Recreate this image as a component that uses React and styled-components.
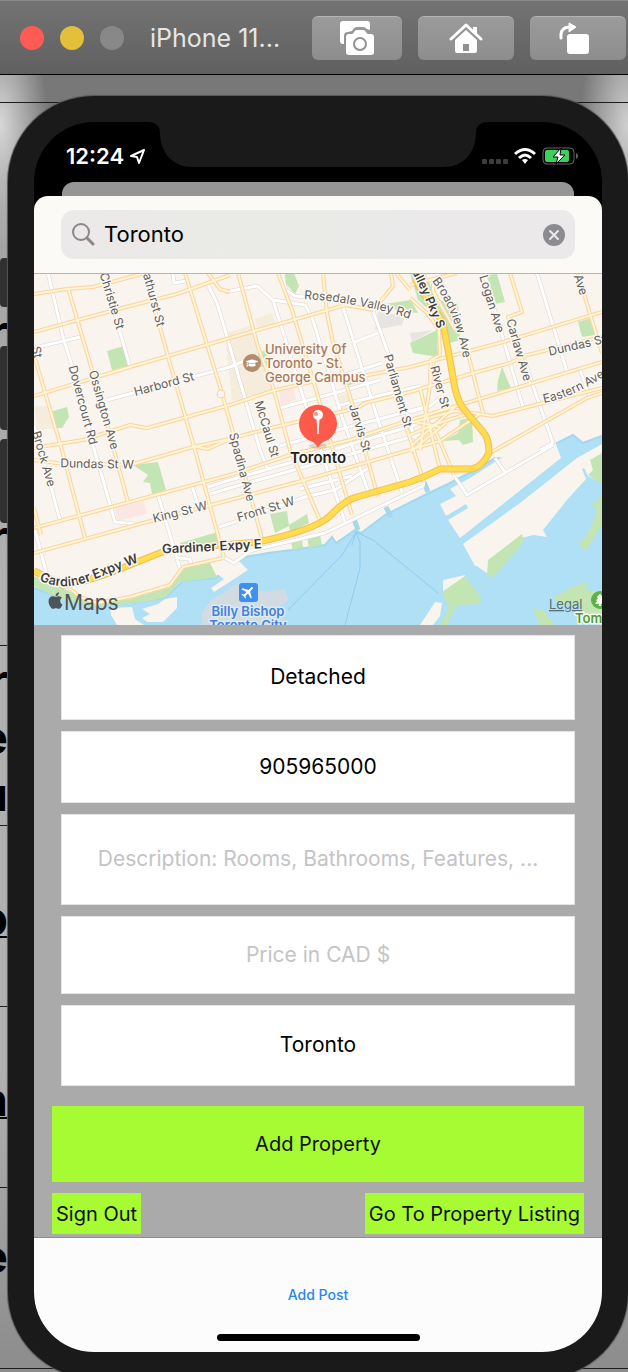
import React from "react";
import styled, { createGlobalStyle } from "styled-components";
import { FaApple, FaTree, FaGraduationCap } from "react-icons/fa";
import { MdLocalAirport } from "react-icons/md";

const Global = createGlobalStyle`
  * { box-sizing: border-box; }
  body { margin: 0; background: #a8a8a8; font-family: Inter, "Liberation Sans", sans-serif; }
  button, input { font: inherit; }
`;

const Page = styled.div`
  min-height: 100vh;
  display: flex;
  flex-direction: column;
  overflow: hidden;
`;

/* ---------- simulator window bar ---------- */

const TitleBar = styled.header`
  display: flex;
  align-items: center;
  height: 75px;
  padding: 0 2px 0 20px;
  background: linear-gradient(#737373, #606060);
  border-top: 1px solid #8a8a8a;
  border-bottom: 1px solid #000;
`;

const Lights = styled.div`
  display: flex;
  gap: 16px;
`;

const Light = styled.button`
  width: 24px;
  height: 24px;
  padding: 0;
  border: 0;
  border-radius: 50%;
  background: ${(p) => p.$color};
`;

const WindowTitle = styled.h1`
  flex: 1;
  margin: 0 0 0 26px;
  font-size: 25px;
  line-height: 32px;
  font-weight: 400;
  color: #e6e6e6;
  white-space: nowrap;
`;

const Tools = styled.div`
  display: flex;
  gap: 16px;
`;

const ToolButton = styled.button`
  display: grid;
  place-items: center;
  width: ${(p) => p.$width}px;
  height: 44px;
  padding: 0;
  border: 0;
  border-top: 1px solid #b4b4b4;
  border-radius: 6px;
  background: linear-gradient(#9b9b9b, #8d8d8d);
`;

/* ---------- document behind the phone ---------- */

const Desktop = styled.main`
  position: relative;
  flex: 1;
  padding: 21px 0 0 8px;
  background:
    radial-gradient(48px 120px at 0 50px, #d8d8d8, rgba(200, 200, 200, 0)),
    radial-gradient(48px 120px at 100% 50px, #d0d0d0, rgba(200, 200, 200, 0)),
    linear-gradient(#787878 0, #787878 30px, #a4a4a4 160px, #b0b0b0 500px, #b0b0b0 1000px, #8c8c8c 1297px);
`;

const Paper = styled.div`
  position: absolute;
  inset: 0;
  overflow: hidden;
`;

const PaperRow = styled.div`
  display: flex;
  flex-direction: column;
  justify-content: ${(p) => p.$justify || "center"};
  height: ${(p) => p.$height}px;
  padding: ${(p) => p.$pad || "0"};
  border-bottom: 1px solid #1c1c1c;
`;

const PaperText = styled.span`
  display: flex;
  justify-content: flex-end;
  width: 8px;
  height: 57px;
  font-size: 46px;
  line-height: 57px;
  font-weight: 700;
  color: #000;
  text-decoration: ${(p) => (p.$underline ? "underline" : "none")};
  text-decoration-thickness: 2px;
`;

const SideKeys = styled.div`
  position: absolute;
  top: 183px;
  left: 0;
  display: flex;
  flex-direction: column;
`;

const SideKey = styled.span`
  width: 9px;
  height: ${(p) => p.$height}px;
  margin-bottom: ${(p) => p.$after || 0}px;
  border-radius: 4px 0 0 4px;
  background: #303030;
`;

/* ---------- phone ---------- */

const Phone = styled.div`
  position: relative;
  margin-bottom: -6px;
  padding: 26px;
  border-radius: 86px;
  background: #1a1a1a;
  box-shadow: 0 0 1px 1px #555;
`;

const Screen = styled.div`
  position: relative;
  display: flex;
  flex-direction: column;
  overflow: hidden;
  border-radius: 60px;
  background: #000;
`;

const Notch = styled.svg`
  position: absolute;
  top: 0;
  left: 50%;
  width: 344px;
  height: 45px;
  margin-left: -172px;
`;

const StatusBar = styled.div`
  display: flex;
  justify-content: space-between;
  align-items: center;
  height: 60px;
  padding: 8px 23px 0 32px;
  color: #fff;
`;

const Clock = styled.div`
  display: flex;
  align-items: center;
  gap: 6px;
  font-size: 22px;
  line-height: 26px;
  font-weight: 600;
`;

const PreviousCard = styled.div`
  height: 14px;
  margin: 0 28px;
  border-radius: 12px 12px 0 0;
  background: #969696;
`;

const Sheet = styled.div`
  position: relative;
  background: #000;
`;

const SearchHeader = styled.div`
  padding: 14px 27px;
  border-radius: 14px 14px 0 0;
  border-bottom: 1px solid #b4b4b0;
  background: #fbfaf7;
`;

const SearchBox = styled.label`
  display: flex;
  align-items: center;
  gap: 8px;
  height: 49px;
  padding: 0 10px;
  border-radius: 13px;
  background: linear-gradient(90deg, #ebe9e9, #eaebe7 45%, #ebe9ea 75%);
`;

const SearchInput = styled.input`
  flex: 1;
  min-width: 0;
  padding: 0 0 2px;
  border: 0;
  outline: 0;
  background: transparent;
  font-size: 22px;
  line-height: 28px;
  color: #000;
`;

const ClearButton = styled.button`
  display: flex;
  padding: 0;
  border: 0;
  background: transparent;
`;

const MapView = styled.svg`
  display: block;
  width: 100%;
  height: 351px;
  background: #f9f4ed;
`;

/* ---------- property form ---------- */

const Form = styled.form`
  padding: 10px 18px 3px;
  background: #aaa;
`;

const Fields = styled.div`
  display: flex;
  flex-direction: column;
  gap: 11px;
  padding: 0 9px 20px;
`;

const Field = styled.input`
  width: 100%;
  height: ${(p) => p.$height}px;
  padding: 0 12px 2px;
  border: 1px solid #e4e4e4;
  border-radius: 0;
  outline: 0;
  background: #fff;
  text-align: center;
  font-size: 21px;
  color: #000;
  &::placeholder { color: #c4c4c6; opacity: 1; }
`;

const Actions = styled.div`
  display: flex;
  justify-content: space-between;
  margin-top: 11px;
`;

const LimeButton = styled.button`
  width: ${(p) => (p.$wide ? "100%" : "auto")};
  height: ${(p) => (p.$wide ? 76 : 41)}px;
  display: block;
  padding: 0 4px;
  border: 0;
  background: #a6fb32;
  color: #101010;
  font-size: 20px;
  white-space: nowrap;
`;

const TabBar = styled.nav`
  display: flex;
  flex-direction: column;
  align-items: center;
  justify-content: space-between;
  height: 115px;
  padding: 48px 0 11px;
  border-top: 1px solid #8e8e8e;
  background: #fcfcfc;
`;

const Tab = styled.a`
  font-size: 14px;
  line-height: 18px;
  font-weight: 500;
  color: #1f87f5;
  text-decoration: none;
`;

const HomeIndicator = styled.span`
  width: 203px;
  height: 7px;
  border-radius: 4px;
  background: #000;
`;

/* ---------- map drawing ---------- */

const Road = styled.path`
  fill: none;
  stroke-linejoin: round;
  stroke: ${(p) => p.$color};
  stroke-width: ${(p) => p.$width};
`;

const MapLabel = styled.text`
  font-size: ${(p) => p.$size || 12}px;
  font-weight: ${(p) => p.$weight || 400};
  fill: ${(p) => p.$color || "#5f5f60"};
  stroke: ${(p) => p.$halo || "#fbf7f1"};
  stroke-width: 3px;
  stroke-linejoin: round;
  paint-order: stroke;
`;

const streets = [
  "M48 273L63 337L75 375L93 445L115 522L137 524", "M34 348L80 337", "M103 273L130 367",
  "M107 400L230 367L258 355", "M207 283L217 303L230 347L260 450L268 470",
  "M225 292L257 286L273 300L305 305L312 317L342 417L369 494", "M273 300L305 403L345 522",
  "M343 307L378 420L402 492", "M283 278L286 290L295 296L305 297",
  "M372 308L388 353L412 430L421 450", "M280 408L335 393L380 380", "M355 342L378 333",
  "M345 375L382 363", "M537 273L567 372", "M484 273L523 407", "M524 360L553 443L540 450",
  "M580 370L590 397", "M410 412L430 406L440 398", "M553 445L467 495L455 477", "M495 458L505 472",
  "M34 425L60 520", "M35 530L47 575L70 590", "M158 495L181 572", "M176 558L190 559L191 564",
  "M192 486L197 502", "M208 487L230 480L300 460L358 442L425 422", "M210 494L230 488L340 457L425 433",
  "M219 527L235 522L305 497L335 490L370 467", "M225 558L234 563L250 551L325 533L400 497L423 486L424 478",
  "M173 274L174 283L186 281", "M280 446L345 428L425 407", "M300 489L352 476", "M340 405L420 386",
  "M363 436L425 418",
];

const arterials = [
  "M34 294L67 289L93 287L127 278L145 273", "M34 332L78 320L130 306L177 294L230 275",
  "M34 396L130 367L230 338L328 310L345 305L373 310", "M34 448L83 440L130 425L147 428L230 405L272 391",
  "M68 288L97 387L128 502", "M34 355L62 450L85 538", "M34 508L41 535",
  "M145 273L167 353L195 450L224 558", "M185 273L222 393L242 465L263 542",
  "M238 273L258 347L273 387L290 450L322 525", "M278 273L292 310L317 393L330 440L352 515",
  "M323 273L327 313L333 343L352 403L378 497", "M225 440L275 427L358 408L365 403L410 392L477 372L510 363L527 355L602 337",
  "M272 391L315 381L358 377L410 367L503 342L602 312", "M410 285L457 273",
  "M34 460L57 463L130 465L193 447L225 440", "M192 446L208 449L230 439",
  "M34 528L100 510L230 475L290 455L350 440L410 420L602 362", "M34 553L143 523L230 500L305 480L368 462L440 441L480 414",
  "M63 583L80 597L97 603L130 597L170 585L183 567L223 558", "M208 273L220 289L230 292",
  "M473 413L493 416L543 403L602 388", "M490 453L587 398L602 393", "M510 273L522 312L508 317L530 383",
  "M467 350L483 413", "M576 268L602 353", "M433 280L433 291L455 330", "M410 298L428 314L439 330L440 355L431 360L430 380",
  "M410 423L455 411L473 413", "M410 435L433 425L470 413", "M412 445L455 407", "M410 452L446 423",
  "M434 360L420 450", "M405 423L424 482", "M435 430L454 475", "M405 420L440 427",
  "M391 273L393 286L385 296L373 310", "M396 273L410 290", "M420 388L440 469",
];

const highway =
  "M415 278L421 290L434 308L443 323L453 377Q456 399 463 408L484 433Q489 439 489 453Q482 467 472 469L440 469Q425 477 410 482L357 497Q345 500 330 516Q315 530 258 542L210 546L165 551L137 562Q90 582 63 585L34 571";

const parks = [
  "M107 351L124 346L130 366L112 370Z", "M53 411L67 407L69 417L62 428L56 428Z",
  "M133 465L158 462L166 490L152 494L150 483L143 482L148 475Z", "M180 543L218 532L220 541L180 548Z",
  "M270 514L287 511L289 526L275 533Z", "M289 525L307 514L309 523L290 532Z",
  "M410 273L425 273L437 300L458 303L460 340L450 343L440 320L418 300Z",
  "M410 343L437 330L438 357L413 353Z", "M487 275L497 274L505 302L495 304Z",
  "M578 322L591 318L595 335L582 337Z", "M502 367L511 388L497 391L498 380Z",
  "M460 420L472 417L473 442L463 445L459 440L443 441L458 433Z", "M285 274L294 273L299 286L295 294L286 284Z",
  "M385 304L411 300L418 313L398 311Z", "M413 343L425 339L425 350L415 352Z", "M256 354L266 350L269 366L259 367Z",
  "M347 375L362 371L361 380L348 386Z",
];

const shoreParks = [
  "M34 576L64 589L96 603L130 599L170 587L184 567L210 563L217 577L180 582L165 598L130 604L92 607L60 599L34 586Z",
  "M291 543L302 540L303 548L293 550Z", "M307 537L320 535L322 545L309 548Z",
  "M488 560L522 534L524 542L493 578L487 575Z", "M602 453L590 460L593 470L588 475L602 484Z",
  "M602 495L592 505L597 510L592 525L583 540L578 542L585 552L602 525Z",
  "M442 592L465 576L481 597L480 604L457 605L447 625L440 625L449 608Z",
  "M533 608L543 610L555 625L540 625Z", "M553 598L570 588L587 581L586 590L602 592L602 612L585 625L580 606L560 605Z",
];

const labels = [
  ["Christie St", 108, 302, 73], ["Bathurst St", 149, 297, 75], ["Brock Ave", 40, 460, 74],
  ["St", 33, 353, 78], ["Dovercourt Rd", 79, 406, 75], ["Ossington Ave", 100, 411, 74],
  ["Harbord St", 165, 388, -15], ["Logan Ave", 488, 305, 73], ["Carlaw Ave", 515, 351, 74],
  ["Ave", 577, 286, 72], ["River St", 436, 388, 75], ["Parliament St", 394, 392, 74],
  ["Jarvis St", 356, 429, 73], ["McCaul St", 263, 430, 73], ["Spadina Ave", 238, 468, 75],
  ["Dundas St W", 97, 468, 1], ["King St W", 181, 516, -14], ["Front St W", 267, 513, -17],
  ["Dundas St E", 583, 348, -13],
];

function TorontoMap() {
  return (
    <MapView viewBox="34 274 568 351" preserveAspectRatio="xMidYMid slice" role="img" aria-label="Map of Toronto">
      <defs>
        <path id="rosedale" d="M304 299Q370 303 424 324" />
        <path id="valley" d="M408 265Q420 284 444 345" />
        <path id="broadview" d="M432 281Q458 315 465 370" />
        <path id="eastern" d="M544 403Q580 396 620 365" />
        <path id="gardiner" d="M39 580Q62 592 90 581T155 556" />
      </defs>
      <path fill="#f5ecdc" d="M225 333L250 326L273 390L232 401ZM255 319L272 313L276 324L257 330ZM34 406L52 407L57 428L38 430ZM338 396L350 393L352 408L342 410Z" />
      <path fill="#fae7e4" d="M279 392L293 388L296 400L281 405ZM115 508L144 501L147 514L117 521Z" />
      <path fill="#e7e5e2" d="M378 312L405 316L402 325L375 330ZM410 333L433 330L412 342Z" />
      {parks.map((d) => <path key={d} d={d} fill="#c3e5b4" />)}
      <path
        fill="#afe0f5"
        stroke="#a3d8ef"
        strokeWidth="2"
        d="M32 587L60 598L92 606L130 603L165 598L183 581L215 578L230 567L245 557L268 553L292 550L325 545L332 537L336 543L355 530L361 533L385 515L425 495L450 483L475 470L495 458L520 460L557 443L573 435L583 443L604 435V627H32Z"
      />
      <g fill="#f9f4ed">
        <path d="M440 504L456 496L450 489L470 478L498 460L530 440L553 436L561 458L460 538L448 520L468 508L466 504L446 516Z" />
        <path d="M463 544L520 503L577 458L604 443V484L588 476L584 468L582 469L586 479L567 500L543 530L547 537L533 535L522 538L492 577L477 566L475 566Z" />
        <path d="M212 570L222 558L240 562L248 570L225 585L214 592L211 588L224 579Z" />
        <path d="M420 625L435 602L442 603L440 616L433 625ZM443 580L465 575L460 590L443 591Z" />
        <path d="M110 608L132 607L135 619L144 625H117L111 615ZM142 609L158 604L165 599L177 597V608L163 622H147L142 618L150 614Z" />
      </g>
      <path fill="#d3dbe2" d="M202 625V612L212 600L225 592L237 583L265 592L285 589L288 600L274 611L288 625Z" />
      <path fill="none" stroke="#a3d8ef" strokeWidth="5" d="M424 482L428 492M386 507L391 517M354 519L358 530" />
      {shoreParks.map((d) => <path key={d} d={d} fill="#c3e5b4" />)}
      <path fill="none" stroke="#8fcbef" d="M356 532L342 555L288 610M356 532L360 542V568L345 625M356 532L373 540L438 593M356 532L352 545" />
      {streets.map((d) => <Road key={d} d={d} $color="#d8d5d1" $width={4} />)}
      {streets.map((d) => <Road key={d} d={d} $color="#fff" $width={3} />)}
      {arterials.map((d) => <Road key={d} d={d} $color="#fbd3a0" $width={4} />)}
      {arterials.map((d) => <Road key={d} d={d} $color="#fff6d2" $width={2} />)}
      <circle cx="221" cy="394" r="4" fill="#f9f4ed" stroke="#fbd3a0" />
      <Road d={highway} $color="#f5bc55" $width={7} />
      <Road d={highway} $color="#ffdd4f" $width={5} />

      {labels.map(([text, x, y, angle]) => (
        <MapLabel key={text + x} textAnchor="middle" transform={`translate(${x} ${y}) rotate(${angle})`}>{text}</MapLabel>
      ))}
      <MapLabel><textPath href="#rosedale">Rosedale Valley Rd</textPath></MapLabel>
      <MapLabel><textPath href="#broadview">Broadview Ave</textPath></MapLabel>
      <MapLabel><textPath href="#eastern">Eastern Ave</textPath></MapLabel>
      <MapLabel $weight={600} $color="#3c3c3c"><textPath href="#valley">Valley Pky S</textPath></MapLabel>
      <MapLabel $size={13} $weight={600} $color="#3c3c3c"><textPath href="#gardiner">Gardiner Expy W</textPath></MapLabel>
      <MapLabel $size={13} $weight={600} $color="#3c3c3c" textAnchor="middle" transform="translate(212 551) rotate(-3)">Gardiner Expy E</MapLabel>

      <MapLabel $size={13} $weight={500} $color="#a9795a">
        <tspan x="265" y="354">University Of</tspan>
        <tspan x="265" y="368">Toronto - St.</tspan>
        <tspan x="265" y="382">George Campus</tspan>
      </MapLabel>
      <circle cx="252" cy="363" r="9" fill="#b38c70" />
      <FaGraduationCap x="246" y="357" size="12" color="#fff" />

      <rect x="239" y="583" width="19" height="19" rx="3" fill="#3f8ff0" />
      <g transform="rotate(45 248 592)"><MdLocalAirport x="240" y="584" size="16" color="#fff" /></g>
      <MapLabel $size={13} $weight={600} $color="#4380dd" $halo="#dceaf4" textAnchor="middle">
        <tspan x="248" y="616">Billy Bishop</tspan>
        <tspan x="248" y="630">Toronto City</tspan>
      </MapLabel>

      <FaApple x="46" y="591" size="19" color="#4b555a" />
      <text x="64" y="610" fontSize="21" fill="#4b555a">Maps</text>
      <a href="#legal">
        <text x="549" y="609" fontSize="13" fill="#5a7078" textDecoration="underline">Legal</text>
      </a>
      <circle cx="600" cy="600" r="9" fill="#5bb346" />
      <FaTree x="594" y="594" size="12" color="#fff" />
      <MapLabel $size={13} $weight={600} $color="#48a035" x="575" y="623">Tommy</MapLabel>

      <ellipse cx="318" cy="446" rx="9" ry="3" fill="#000" opacity=".12" />
      <path fill="#fc5b4c" d="M318 448C316 444 314 442 308 440A19 19 0 1 1 328 440C322 442 320 444 318 448Z" />
      <circle cx="318" cy="415" r="5" fill="#fff" />
      <circle cx="316" cy="414" r="2" fill="#fc8d81" />
      <path d="M317 419H319L318 434Z" fill="#fff" stroke="#fff" />
      <MapLabel $size={15} $weight={600} $color="#202020" textAnchor="middle" x="318" y="463">Toronto</MapLabel>
    </MapView>
  );
}

const ScreenshotIcon = () => (
  <svg width="36" height="36" viewBox="0 0 36 36" aria-hidden="true">
    <path fill="#fff" d="M4 1H28Q31 1 31 4V10L28 9Q26 7 24 7H18Q15 7 13 11L9 12Q5 12 5 16V24H4Q1 24 1 21V4Q1 1 4 1Z" />
    <path fill="#fff" d="M10 14H13Q14 14 15 12T18 10H24Q26 10 27 12T29 14H32Q35 14 35 17V32Q35 35 32 35H10Q7 35 7 32V17Q7 14 10 14Z" />
    <circle cx="21" cy="24" r="6" fill="none" stroke="#929292" strokeWidth="2" />
  </svg>
);

const HomeIcon = () => (
  <svg width="36" height="34" viewBox="0 0 36 34" aria-hidden="true">
    <path d="M3 18L18 4L33 18" fill="none" stroke="#fff" strokeWidth="3" strokeLinecap="round" strokeLinejoin="round" />
    <path fill="#fff" d="M25 6H29V14L25 10ZM18 9L29 19V30Q29 32 27 32H9Q7 32 7 30V19ZM15 23V30H21V23Z" fillRule="evenodd" />
  </svg>
);

const RotateIcon = () => (
  <svg width="40" height="34" viewBox="0 0 40 34" aria-hidden="true">
    <path d="M3 17Q2 6 12 6" fill="none" stroke="#fff" strokeWidth="3" strokeLinecap="round" />
    <path d="M11 2L18 6L11 11Z" fill="#fff" stroke="#fff" strokeLinejoin="round" />
    <rect x="9" y="13" width="22" height="20" rx="3" fill="#fff" />
  </svg>
);

const StatusIcons = () => (
  <svg width="98" height="20" viewBox="0 0 98 20" aria-label="Wi-Fi on, battery charging" role="img">
    {[0, 7, 14, 21].map((x) => <rect key={x} x={x + 1} y="13" width="5" height="5" rx="1" fill="#3d3d3d" />)}
    <g fill="none" stroke="#fff" strokeWidth="3">
      <path d="M34 8Q44 -1 54 8" />
      <path d="M38 12Q44 6 50 12" />
    </g>
    <path fill="#fff" d="M41 14Q44 12 47 14L44 18Z" />
    <rect x="62" y="2" width="31" height="16" rx="4" fill="none" stroke="#666" />
    <rect x="64" y="4" width="24" height="12" rx="2" fill="#3bd15c" />
    <path d="M95 7Q97 8 97 10T95 13Z" fill="#666" />
    <path d="M80 2L72 11H77L75 18L84 9H79Z" fill="#fff" stroke="#000" />
  </svg>
);

export default function App() {
  return (
    <Page>
      <Global />
      <TitleBar>
        <Lights>
          <Light $color="#fe5b55" aria-label="Close window" />
          <Light $color="#e4bf3c" aria-label="Minimise window" />
          <Light $color="#888" aria-label="Zoom window" />
        </Lights>
        <WindowTitle>iPhone 11...</WindowTitle>
        <Tools>
          <ToolButton $width={90} aria-label="Screenshot"><ScreenshotIcon /></ToolButton>
          <ToolButton $width={96} aria-label="Home"><HomeIcon /></ToolButton>
          <ToolButton $width={96} aria-label="Rotate"><RotateIcon /></ToolButton>
        </Tools>
      </TitleBar>

      <Desktop>
        <Paper aria-hidden="true">
          <PaperRow $height={28} />
          <PaperRow $height={543} $justify="space-between" $pad="200px 0 80px">
            <PaperText>r</PaperText>
            <PaperText>r</PaperText>
          </PaperRow>
          <PaperRow $height={180} $pad="4px 0 0">
            <PaperText>r</PaperText>
            <PaperText>e</PaperText>
            <PaperText>u</PaperText>
          </PaperRow>
          <PaperRow $height={181} $pad="4px 0 0"><PaperText $underline>p</PaperText></PaperRow>
          <PaperRow $height={181} $pad="4px 0 0"><PaperText $underline>n</PaperText></PaperRow>
          <PaperRow $height={181} $pad="0 0 44px"><PaperText>e</PaperText></PaperRow>
        </Paper>
        <SideKeys aria-hidden="true">
          <SideKey $height={49} $after={39} />
          <SideKey $height={84} $after={9} />
          <SideKey $height={84} />
        </SideKeys>

        <Phone>
          <Screen>
            <Notch viewBox="0 0 344 45" aria-hidden="true">
              <path fill="#1a1a1a" d="M0 0C10 0 14 3 14 12C15 32 27 45 47 45H297C317 45 329 32 330 12C330 3 334 0 344 0Z" />
            </Notch>
            <StatusBar>
              <Clock>
                12:24
                <svg width="15" height="16" viewBox="0 0 15 16" aria-hidden="true">
                  <path d="M14 2L1 8L7 9L9 15Z" fill="none" stroke="#fff" strokeWidth="2" strokeLinejoin="round" />
                </svg>
              </Clock>
              <StatusIcons />
            </StatusBar>
            <PreviousCard />
            <Sheet>
              <SearchHeader>
                <SearchBox>
                  <svg width="25" height="25" viewBox="0 0 25 25" aria-hidden="true">
                    <g fill="none" stroke="#88888c" strokeWidth="2" strokeLinecap="round">
                      <circle cx="10" cy="10" r="8" />
                      <path d="M16 16L22 22" strokeWidth="3" />
                    </g>
                  </svg>
                  <SearchInput type="text" aria-label="Search for a place" defaultValue="Toronto" />
                  <ClearButton type="button" aria-label="Clear search">
                    <svg width="22" height="22" viewBox="0 0 22 22" aria-hidden="true">
                      <circle cx="11" cy="11" r="11" fill="#8c8b90" />
                      <path d="M7 7L15 15M15 7L7 15" stroke="#ecebeb" strokeWidth="2" strokeLinecap="round" />
                    </svg>
                  </ClearButton>
                </SearchBox>
              </SearchHeader>
              <TorontoMap />
              <Form onSubmit={(e) => e.preventDefault()}>
                <Fields>
                  <Field $height={85} aria-label="Property type" defaultValue="Detached" />
                  <Field $height={72} aria-label="Phone number" defaultValue="905965000" />
                  <Field $height={91} aria-label="Description" placeholder="Description: Rooms, Bathrooms, Features, ..." />
                  <Field $height={78} aria-label="Price" placeholder="Price in CAD $" />
                  <Field $height={81} aria-label="City" defaultValue="Toronto" />
                </Fields>
                <LimeButton $wide type="submit">Add Property</LimeButton>
                <Actions>
                  <LimeButton type="button">Sign Out</LimeButton>
                  <LimeButton type="button">Go To Property Listing</LimeButton>
                </Actions>
              </Form>
              <TabBar>
                <Tab href="#add-post">Add Post</Tab>
                <HomeIndicator />
              </TabBar>
            </Sheet>
          </Screen>
        </Phone>
      </Desktop>
    </Page>
  );
}
